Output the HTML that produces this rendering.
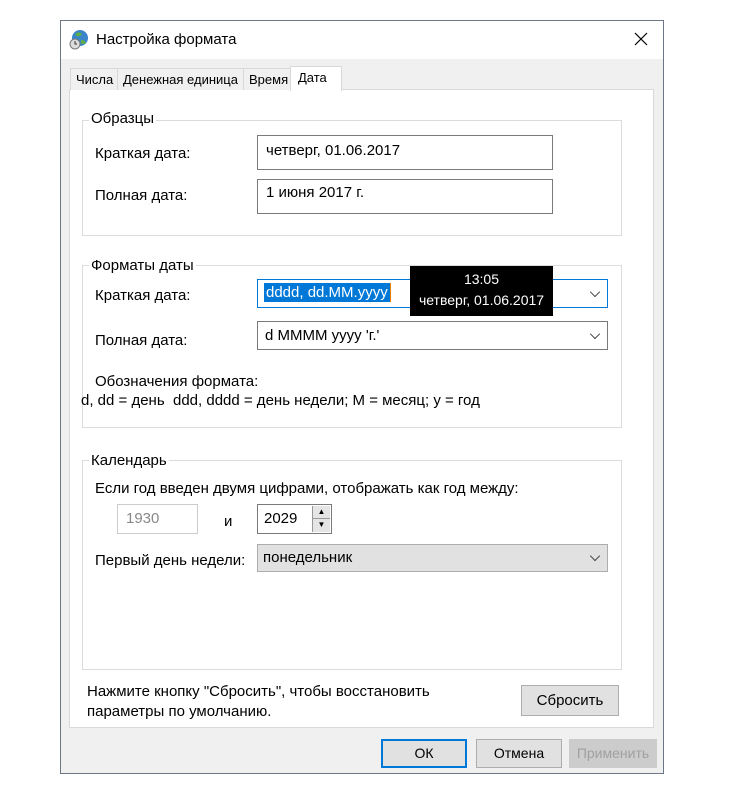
<!DOCTYPE html>
<html><head><meta charset="utf-8"><style>
*{box-sizing:border-box;margin:0;padding:0}
body{width:735px;height:797px;background:#fff;position:relative;font-family:"Liberation Sans","Noto Sans CJK SC",sans-serif;font-size:15px;color:#000;overflow:hidden}
.a{position:absolute}
.win{left:60px;top:20px;width:604px;height:754px;border:1px solid #6b7785;background:#f0f0f0}
.title{left:61px;top:21px;width:602px;height:38px;background:#fff}
.tab{top:68px;height:22px;background:#f0f0f0;border:1px solid #d9d9d9;border-bottom:none;font-size:13px;padding:3px 0 0 5px}
.panel{left:69px;top:89px;width:585px;height:639px;background:#fff;border:1px solid #d9d9d9}
.grp{border:1px solid #dcdcdc}
.leg{background:#fff;padding:0 2px;font-size:15px}
.box{border:1px solid #7a7a7a;background:#fff;padding:0 8px;line-height:32px}
.chev{position:absolute;right:8px;top:8px;width:8px;height:8px;border-right:1px solid #333;border-bottom:1px solid #333;transform:rotate(45deg) scale(0.9)}
.btn{top:739px;height:29px;border:1px solid #adadad;background:#e1e1e1;text-align:center;line-height:27px;font-size:14px}
</style></head><body>
<div class="a win"></div>
<div class="a title"></div>
<svg class="a" style="left:68px;top:28px" width="22" height="22" viewBox="0 0 22 22"><circle cx="12" cy="10" r="8" fill="#3a86c8"/><path d="M7 6q4-3 7 0q-2 3-5 2z M13 12q4 0 5 3q-3 2-5 0z" fill="#5fb043"/><circle cx="7" cy="16" r="5" fill="#ddd" stroke="#777"/><path d="M7 13v3h2" stroke="#333" fill="none"/></svg>
<div class="a" style="left:96px;top:31px;font-size:15px">Настройка формата</div>
<svg class="a" style="left:634px;top:32px" width="14" height="14"><path d="M1 1L13 13M13 1L1 13" stroke="#000" stroke-width="1.2"/></svg>
<div class="a panel"></div>
<div class="a tab" style="left:70px;width:48px">Числа</div>
<div class="a tab" style="left:117px;width:127px">Денежная единица</div>
<div class="a tab" style="left:243px;width:48px">Время</div>
<div class="a tab" style="left:290px;top:66px;height:25px;width:52px;background:#fff;padding-left:7px">Дата</div>

<div class="a grp" style="left:82px;top:120px;width:540px;height:116px"></div>
<div class="a leg" style="left:89px;top:110px;font-size:15px">Образцы</div>
<div class="a" style="left:95px;top:145px">Краткая дата:</div>
<div class="a box" style="left:257px;top:135px;width:296px;height:35px;line-height:30px">четверг, 01.06.2017</div>
<div class="a" style="left:95px;top:187px">Полная дата:</div>
<div class="a box" style="left:257px;top:179px;width:296px;height:35px;line-height:26px">1 июня 2017 г.</div>

<div class="a grp" style="left:82px;top:265px;width:540px;height:163px"></div>
<div class="a leg" style="left:89px;top:257px">Форматы даты</div>
<div class="a" style="left:95px;top:287px">Краткая дата:</div>
<div class="a box" style="left:257px;top:279px;width:351px;height:29px;border-color:#0078d7;line-height:26px;padding-left:6px"><span style="background:#0078d7;color:#fff;padding:1px 2px;border-right:1px solid #f08000">dddd, dd.MM.yyyy</span><div class="chev"></div></div>
<div class="a" style="left:95px;top:332px">Полная дата:</div>
<div class="a box" style="left:257px;top:321px;width:351px;height:29px;line-height:27px;padding-left:7px">d MMMM yyyy 'г.'<div class="chev"></div></div>
<div class="a" style="left:410px;top:266px;width:143px;height:50px;background:#000;color:#fff;text-align:center;font-size:14px;line-height:21px;padding-top:3px">13:05<br>четверг, 01.06.2017</div>
<div class="a" style="left:95px;top:373px">Обозначения формата:</div>
<div class="a" style="left:81px;top:392px">d, dd = день&nbsp; ddd, dddd = день недели; M = месяц; y = год</div>

<div class="a grp" style="left:82px;top:460px;width:540px;height:210px"></div>
<div class="a leg" style="left:89px;top:452px">Календарь</div>
<div class="a" style="left:95px;top:480px">Если год введен двумя цифрами, отображать как год между:</div>
<div class="a" style="left:117px;top:504px;width:81px;height:30px;border:1px solid #ccc;color:#888;padding:5px 0 0 8px">1930</div>
<div class="a" style="left:224px;top:513px">и</div>
<div class="a" style="left:257px;top:504px;width:75px;height:30px;border:1px solid #7a7a7a;padding:5px 0 0 6px">2029</div>
<div class="a" style="left:312px;top:506px;width:18px;height:26px;background:#e5e5e5;border-left:1px solid #999"><div style="height:13px;border-bottom:1px solid #999;font-size:8px;text-align:center;line-height:12px">▲</div><div style="font-size:8px;text-align:center;line-height:12px">▼</div></div>
<div class="a" style="left:95px;top:552px">Первый день недели:</div>
<div class="a" style="left:257px;top:544px;width:351px;height:28px;background:#e1e1e1;border:1px solid #adadad;padding:4px 0 0 5px">понедельник<div class="chev" style="top:7px"></div></div>

<div class="a" style="left:87px;top:682px;line-height:20px">Нажмите кнопку "Сбросить", чтобы восстановить<br>параметры по умолчанию.</div>
<div class="a" style="left:521px;top:685px;width:98px;height:31px;border:1px solid #adadad;background:#e1e1e1;text-align:center;line-height:29px">Сбросить</div>

<div class="a btn" style="left:381px;width:86px;border:2px solid #0078d7;line-height:25px">ОК</div>
<div class="a btn" style="left:476px;width:86px">Отмена</div>
<div class="a btn" style="left:569px;width:88px;color:#a0a0a0;border-color:#ccc;background:#ccc">Применить</div>
</body></html>
